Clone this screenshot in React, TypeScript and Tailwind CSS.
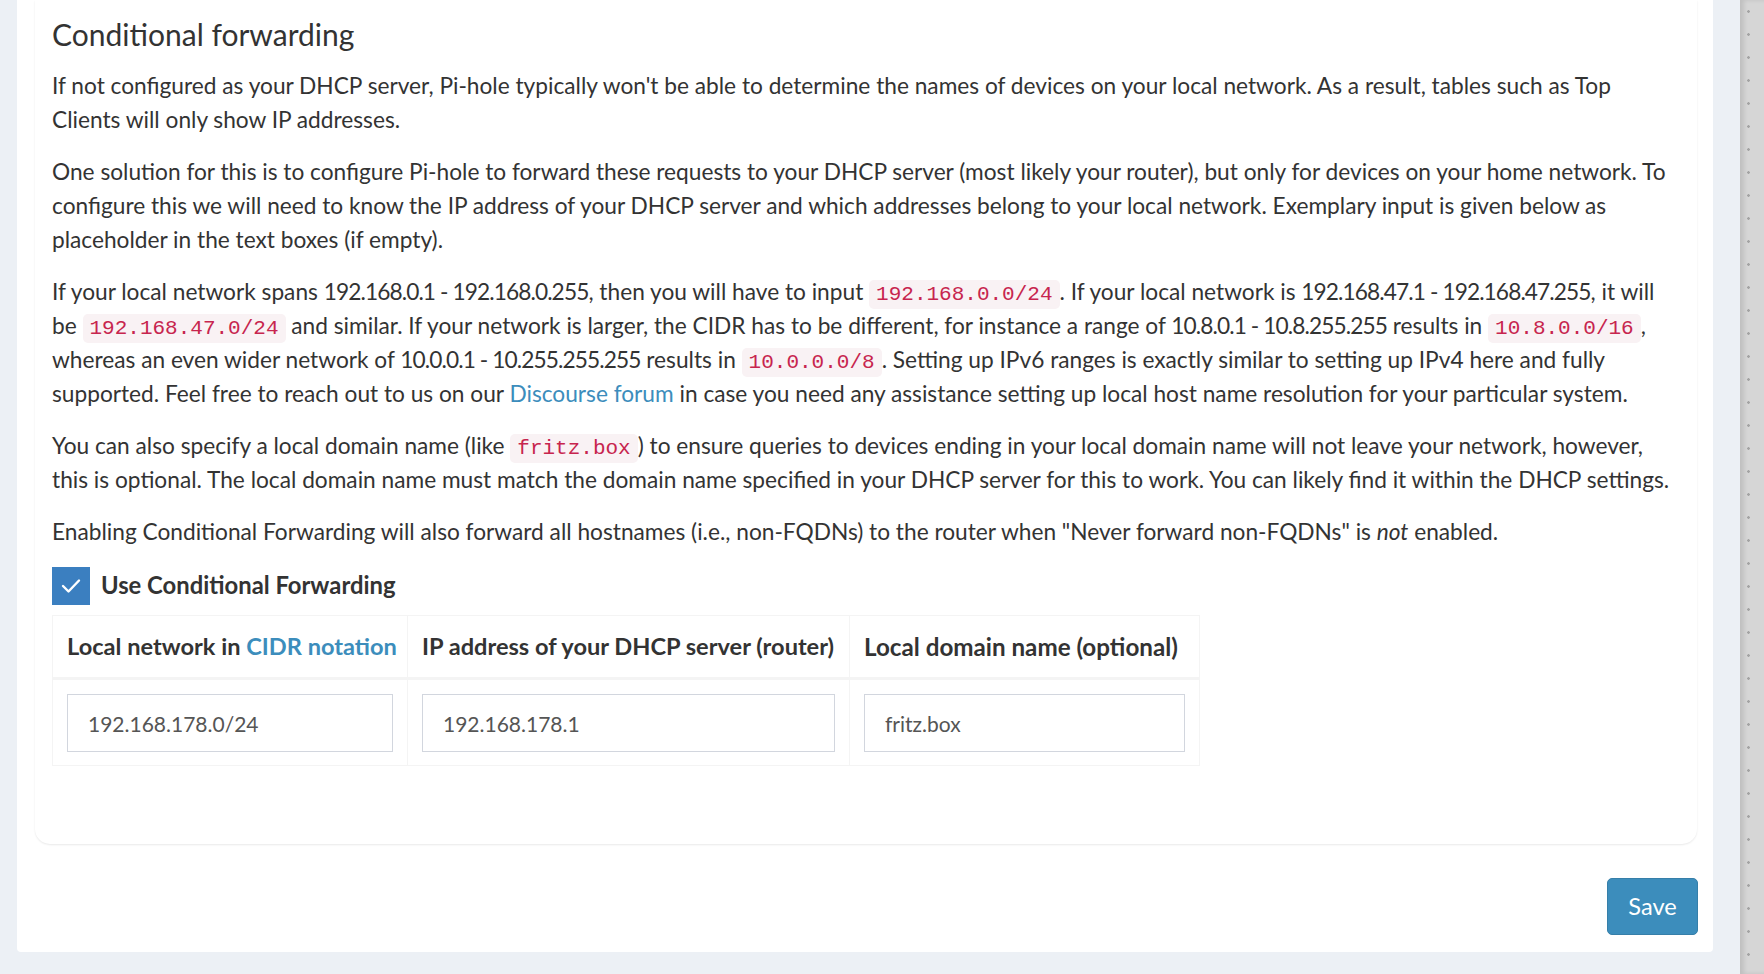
import React from "react";

function Code({ children }: { children: React.ReactNode }) {
  return (
    <code className="rounded-[5px] bg-[#f9f2f4] px-[7px] py-[3px] font-['Liberation_Mono',monospace] text-[21px] leading-none text-[#c7254e]">
      {children}
    </code>
  );
}

function Link({ children }: { children: React.ReactNode }) {
  return <a className="text-[#3c8dbc]">{children}</a>;
}

function N({ children }: { children: React.ReactNode }) {
  return <span className="tracking-[-0.9px]">{children}</span>;
}

export default function App() {
  return (
    <div className="flex h-[974px] w-[1764px] overflow-hidden bg-[#ecf0f5] pl-[17px] font-['Lato',sans-serif] text-[#333]">
      <div className="flex w-[1696px] shrink-0 flex-col self-start rounded-b-[4px] bg-white">
        <div className="ml-[18px] mr-[16px] rounded-b-[15px] bg-white pb-[78px] pl-[17px] pt-[16px] shadow-[0_1px_2px_rgba(0,0,0,0.09)]">
          <h4 className="mb-[17px] text-[30px] font-normal leading-[36px] text-[#333]">Conditional forwarding</h4>
          <div className="whitespace-nowrap text-[22.7px] leading-[34px]">
            <p className="mb-[18px]">
              If not configured as your DHCP server, Pi-hole typically won't be able to determine the names of devices on your local network. As a result, tables such as Top
              <br />
              Clients will only show IP addresses.
            </p>
            <p className="mb-[18px]">
              One solution for this is to configure Pi-hole to forward these requests to your DHCP server (most likely your router), but only for devices on your home network. To
              <br />
              configure this we will need to know the IP address of your DHCP server and which addresses belong to your local network. Exemplary input is given below as
              <br />
              placeholder in the text boxes (if empty).
            </p>
            <p className="mb-[18px]">
              If your local network spans <N>192.168.0.1 - 192.168.0.255</N>, then you will have to input <Code>192.168.0.0/24</Code>. If your local network is <N>192.168.47.1 - 192.168.47.255</N>, it will
              <br />
              be <Code>192.168.47.0/24</Code> and similar. If your network is larger, the CIDR has to be different, for instance a range of <N>10.8.0.1 - 10.8.255.255</N> results in <Code>10.8.0.0/16</Code>,
              <br />
              whereas an even wider network of <N>10.0.0.1 - 10.255.255.255</N> results in <Code>10.0.0.0/8</Code>. Setting up IPv6 ranges is exactly similar to setting up IPv4 here and fully
              <br />
              supported. Feel free to reach out to us on our <Link>Discourse forum</Link> in case you need any assistance setting up local host name resolution for your particular system.
            </p>
            <p className="mb-[18px]">
              You can also specify a local domain name (like <Code>fritz.box</Code>) to ensure queries to devices ending in your local domain name will not leave your network, however,
              <br />
              this is optional. The local domain name must match the domain name specified in your DHCP server for this to work. You can likely find it within the DHCP settings.
            </p>
            <p>
              Enabling Conditional Forwarding will also forward all hostnames (i.e., non-FQDNs) to the router when "Never forward non-FQDNs" is <em>not</em> enabled.
            </p>
          </div>

          <div className="mt-[18px] flex items-center gap-[11px]">
            <div className="flex h-[38px] w-[38px] items-center justify-center bg-[#3b7fc0]">
              <svg width="20" height="16" viewBox="0 0 20 16" fill="none">
                <polyline points="2,8 7.5,13.5 18,2.5" stroke="white" strokeWidth="2.4" strokeLinecap="round" strokeLinejoin="round" />
              </svg>
            </div>
            <span className="text-[23.8px] font-bold leading-[33.75px] text-[#333]">Use Conditional Forwarding</span>
          </div>

          <table className="mt-[10px] w-[1147px] table-fixed border-collapse text-[23.6px]">
            <colgroup>
              <col className="w-[355px]" />
              <col className="w-[442px]" />
              <col className="w-[350px]" />
            </colgroup>
            <thead>
              <tr className="border-b-[3px] border-[#f4f4f4]">
                <th className="h-[63px] border border-[#f4f4f4] px-[14px] text-left font-bold leading-[33.75px] whitespace-nowrap">
                  Local network in <Link>CIDR notation</Link>
                </th>
                <th className="h-[63px] border border-[#f4f4f4] px-[14px] text-left font-bold leading-[33.75px] whitespace-nowrap">
                  IP address of your DHCP server (router)
                </th>
                <th className="h-[63px] border border-[#f4f4f4] px-[14px] text-left text-[24.2px] font-bold leading-[33.75px] whitespace-nowrap">
                  Local domain name (optional)
                </th>
              </tr>
            </thead>
            <tbody>
              <tr>
                <td className="border border-[#f4f4f4] px-[14px] pb-[13px] pt-[14px]">
                  <input readOnly value="192.168.178.0/24" className="h-[58px] w-full border border-[#d2d6de] px-[20px] font-['Lato',sans-serif] text-[21px] text-[#555] outline-none" />
                </td>
                <td className="border border-[#f4f4f4] px-[14px] pb-[13px] pt-[14px]">
                  <input readOnly value="192.168.178.1" className="h-[58px] w-full border border-[#d2d6de] px-[20px] font-['Lato',sans-serif] text-[21px] text-[#555] outline-none" />
                </td>
                <td className="border border-[#f4f4f4] px-[14px] pb-[13px] pt-[14px]">
                  <input readOnly value="fritz.box" className="h-[58px] w-full border border-[#d2d6de] px-[20px] font-['Lato',sans-serif] text-[21px] text-[#555] outline-none" />
                </td>
              </tr>
            </tbody>
          </table>
        </div>

        <div className="flex justify-end pb-[17px] pr-[15px] pt-[34px]">
          <button className="h-[57px] w-[91px] rounded-[5px] border border-[#367fa9] bg-[#3c8dbc] text-[23.6px] text-white">
            Save
          </button>
        </div>
      </div>

      <div className="ml-[27px] h-full flex-1 bg-[#d6d6d6] bg-[radial-gradient(circle,#a4a4a4_1px,transparent_1.6px)] bg-[length:17px_23px] shadow-[inset_4px_0_4px_rgba(0,0,0,0.1)]" />
    </div>
  );
}
